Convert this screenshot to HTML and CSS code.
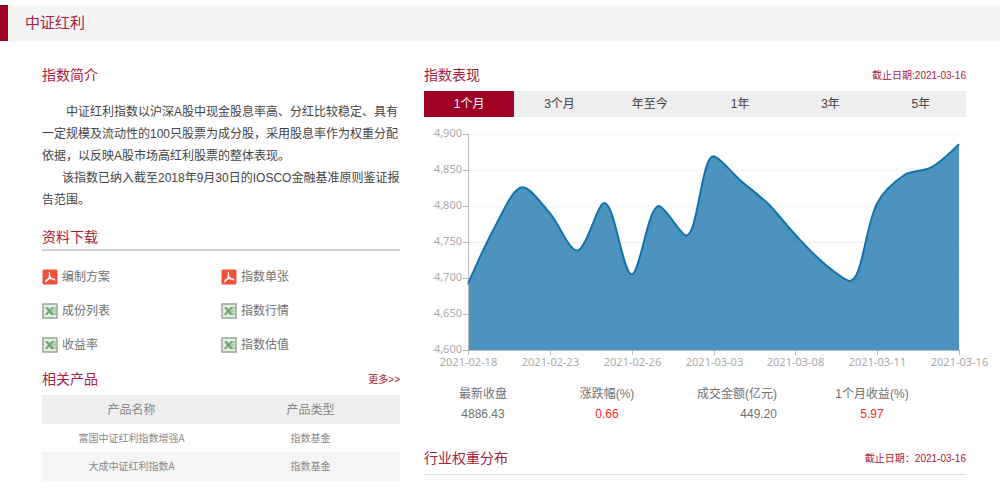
FILE: index.html
```html
<!DOCTYPE html>
<html lang="zh-CN">
<head>
<meta charset="utf-8">
<title>中证红利</title>
<link rel="stylesheet" href="styles.css">
</head>
<body>
<svg class="sprite" aria-hidden="true">
  <symbol id="pdf" viewBox="0 0 16 16">
    <rect x="0.5" y="0.5" width="15" height="15" rx="1.5" fill="#ee5038"/>
    <path d="M7.200 3.300c.7 1.600.6 3.200.1 4.700-.6 1.700-1.900 3.500-3.700 4.600M7.300 6.200c.8 2.200 2.600 4 5.400 4.600M4.300 11c2.300-1.300 5-1.700 8.300-.9" fill="none" stroke="#fff" stroke-width="1.300" stroke-linecap="round"/>
  </symbol>
  <symbol id="xls" viewBox="0 0 16 16">
    <rect x="1" y="1" width="14" height="14" fill="#e6efe4" stroke="#93a894" stroke-width="1.500"/>
    <path d="M9.500 4H14v8H9.500z" fill="#a5c6a3"/>
    <path d="M10 6.500h4M10 9.500h4M12.300 4v8" stroke="#d5e4d3" stroke-width=".6"/>
    <path d="M3 4.200h3.200l1.500 2.200 2-2.400H12L8.900 8l3.300 4H9L7.200 9.600 5.300 12H2.800l3-3.900z" fill="#6fa46f"/>
  </symbol>
</svg>

<header class="title-bar"><h1>中证红利</h1></header>

<main class="columns">
  <div class="column">
    <section>
      <div class="section-head"><h2>指数简介</h2></div>
      <div class="intro">
        <p>中证红利指数以沪深A股中现金股息率高、分红比较稳定、具有一定规模及流动性的100只股票为成分股，采用股息率作为权重分配依据，以反映A股市场高红利股票的整体表现。</p>
        <p>该指数已纳入截至2018年9月30日的IOSCO金融基准原则鉴证报告范围。</p>
      </div>
    </section>

    <section>
      <div class="section-head ruled-thick"><h2>资料下载</h2></div>
      <ul class="downloads">
        <li><a href="#"><svg><use href="#pdf"/></svg>编制方案</a></li>
        <li><a href="#"><svg><use href="#pdf"/></svg>指数单张</a></li>
        <li><a href="#"><svg><use href="#xls"/></svg>成份列表</a></li>
        <li><a href="#"><svg><use href="#xls"/></svg>指数行情</a></li>
        <li><a href="#"><svg><use href="#xls"/></svg>收益率</a></li>
        <li><a href="#"><svg><use href="#xls"/></svg>指数估值</a></li>
      </ul>
    </section>

    <section>
      <div class="section-head"><h2>相关产品</h2><a class="note" href="#">更多&gt;&gt;</a></div>
      <table class="products">
        <thead><tr><th scope="col">产品名称</th><th scope="col">产品类型</th></tr></thead>
        <tbody>
          <tr><td>富国中证红利指数增强A</td><td>指数基金</td></tr>
          <tr><td>大成中证红利指数A</td><td>指数基金</td></tr>
        </tbody>
      </table>
    </section>
  </div>

  <div class="column">
    <section>
      <div class="section-head"><h2>指数表现</h2><span class="note">截止日期:2021-03-16</span></div>
      <div class="tabs">
        <button type="button" class="active">1个月</button>
        <button type="button">3个月</button>
        <button type="button">年至今</button>
        <button type="button">1年</button>
        <button type="button">3年</button>
        <button type="button">5年</button>
      </div>
      <svg class="chart" id="chart" viewBox="0 0 542 250" role="img" aria-label="指数表现"></svg>
      <dl class="stats">
        <div><dt>最新收盘</dt><dd>4886.43</dd></div>
        <div><dt>涨跌幅(%)</dt><dd class="up">0.66</dd></div>
        <div class="align-end"><dt>成交金额(亿元)</dt><dd>449.20</dd></div>
        <div><dt>1个月收益(%)</dt><dd class="up">5.97</dd></div>
      </dl>
    </section>

    <section>
      <div class="section-head ruled"><h2>行业权重分布</h2><span class="note">截止日期：2021-03-16</span></div>
    </section>
  </div>
</main>
<script src="chart.js"></script>
</body>
</html>
```
FILE: styles.css
```css
* { box-sizing: border-box; }

body {
  margin: 0;
  padding-top: 5px;
  background: #fff;
  color: #444;
  font: 12px/22px "Liberation Sans", "Noto Sans CJK SC", sans-serif;
}

h1, h2, p, ul, dl, dd { margin: 0; padding: 0; }
h1, h2 { color: #a8203f; font-weight: 400; }
a { color: inherit; text-decoration: none; }

.sprite { position: absolute; width: 0; height: 0; }

.title-bar {
  padding: 6px 17px;
  border-left: 8px solid #9f0026;
  background: #f4f4f4;
}
.title-bar h1 { font-size: 15px; line-height: 24px; }

.columns {
  display: grid;
  grid-template-columns: 358fr 542fr;
  gap: 24px;
  padding: 24px 34px 0 42px;
}

.section-head {
  display: flex;
  justify-content: space-between;
  align-items: center;
}
.section-head h2 { font-size: 14px; line-height: 20px; }
.note { padding-top: 2px; color: #a8203f; font-size: 10px; line-height: 18px; }
.ruled-thick { padding-bottom: 2px; border-bottom: 2px solid #d0d3d2; }
.ruled { padding-bottom: 6px; border-bottom: 1px solid #ddd; }

.intro { padding: 16px 0; }
.intro p { text-indent: 24px; }
.intro p + p { text-indent: 20px; }

.downloads {
  display: grid;
  grid-template-columns: 1fr 1fr;
  padding: 9px 0 7px;
  list-style: none;
}
.downloads a {
  display: flex;
  align-items: center;
  gap: 4px;
  height: 34px;
  color: #707070;
}
.downloads svg { width: 16px; height: 16px; }

.products {
  width: 100%;
  margin-top: 6px;
  border-collapse: collapse;
  table-layout: fixed;
  color: #888;
  text-align: center;
}
.products th, .products td { padding: 3px 0; font-weight: 400; }
.products th { padding: 4px 0 2px; background: #eee; line-height: 23px; }
.products td { font-family: "Noto Sans CJK SC", sans-serif; font-size: 10px; line-height: 22px; }
.products tr:nth-child(even) td { padding: 3px 0 4px; background: #f5f5f5; }

.tabs {
  display: grid;
  grid-template-columns: repeat(6, 1fr);
  margin-top: 6px;
  background: #eee;
}
.tabs button {
  padding: 2px 0;
  border: 0;
  background: none;
  color: #444;
  font: inherit;
}
.tabs .active { background: #9f0026; color: #fff; }

.chart { display: block; width: 100%; overflow: visible; }
.chart text { fill: #aaa; font: 11px "Noto Sans", sans-serif; }
.chart .y-label { text-anchor: end; }
.chart .x-label { text-anchor: middle; }
.chart .grid { stroke: #f5f5f5; }
.chart .grid-over { stroke: #000; stroke-opacity: .03; }
.chart .axis { fill: none; stroke: #b8b8b8; }
.chart .area { fill: #4c94bf; }
.chart .line { fill: none; stroke: #1272aa; stroke-width: 2; }

.stats {
  display: grid;
  grid-template-columns: 118fr 130fr 130fr 140fr 24fr;
  padding: 17px 0 24px;
  color: #707070;
  line-height: 20px;
  text-align: center;
}
.stats .align-end { justify-self: center; text-align: right; }
.stats .up { color: #ff2a20; }
```
FILE: chart.js
```js
const svg = document.getElementById('chart');
const values = [4692, 4772, 4826, 4790, 4738, 4804, 4705, 4800, 4759, 4869,
  4835, 4803, 4760, 4722, 4696, 4804, 4843, 4854, 4886];
const dates = ['2021-02-18', '2021-02-23', '2021-02-26', '2021-03-03',
  '2021-03-08', '2021-03-11', '2021-03-16'];
const plot = { left: 44, right: 535, top: 17, bottom: 233, min: 4600, max: 4900 };

function add(tag, attributes, text) {
  const node = document.createElementNS('http://www.w3.org/2000/svg', tag);
  for (const key in attributes) node.setAttribute(key, attributes[key]);
  if (text) node.textContent = text;
  svg.append(node);
}

const xAt = (i, count) => plot.left + (plot.right - plot.left) * i / (count - 1);
const yAt = v => plot.bottom - (plot.bottom - plot.top) * (v - plot.min) / (plot.max - plot.min);
const points = values.map((v, i) => [xAt(i, values.length), yAt(v)]);
const clamp = (v, a, b) => Math.max(Math.min(a, b), Math.min(Math.max(a, b), v));

// Smooth curve whose control points stay between neighbouring values.
function smoothPath(pts) {
  let path = 'M' + pts[0].join(' ');
  let outgoing = pts[0];
  for (let i = 1; i < pts.length; i++) {
    const p = pts[i], prev = pts[i - 1], next = pts[i + 1];
    let incoming = p, after = p;
    if (next) {
      const a = Math.hypot(p[0] - prev[0], p[1] - prev[1]);
      const b = Math.hypot(next[0] - p[0], next[1] - p[1]);
      const r = b / (a + b);
      after = p.map((c, k) => clamp(c + (next[k] - prev[k]) * 0.32 * r, c, next[k]));
      incoming = p.map((c, k) => clamp(c - (after[k] - c) * a / b, c, prev[k]));
      after = p.map((c, k) => c + (c - incoming[k]) * b / a);
    }
    path += ' C' + [...outgoing, ...incoming, ...p].map(n => n.toFixed(1)).join(' ');
    outgoing = after;
  }
  return path;
}

const ticks = [4600, 4650, 4700, 4750, 4800, 4850, 4900];
const gridLine = (v, name) => add('line', {
  class: name, x1: plot.left, x2: plot.right,
  y1: Math.round(yAt(v)) + 0.5, y2: Math.round(yAt(v)) + 0.5
});
ticks.forEach(v => gridLine(v, 'grid'));

const curve = smoothPath(points);
add('path', { class: 'area', d: `${curve} V${plot.bottom} H${plot.left} Z` });
ticks.slice(1, 4).forEach(v => gridLine(v, 'grid-over'));
add('path', { class: 'axis', d: `M${plot.left + 0.5} ${plot.top} V${plot.bottom + 0.5} H${plot.right}` });
add('path', { class: 'line', d: curve });

ticks.forEach(v => {
  const y = Math.round(yAt(v)) + 0.5;
  add('line', { class: 'axis', x1: plot.left - 5, x2: plot.left, y1: y, y2: y });
  add('text', { class: 'y-label', x: 38, y: y + 2.5 }, v.toLocaleString('en-US'));
});
dates.forEach((date, i) => {
  const x = Math.round(xAt(i, dates.length)) + 0.5;
  add('line', { class: 'axis', x1: x, x2: x, y1: plot.bottom, y2: plot.bottom + 5 });
  add('text', { class: 'x-label', x, y: plot.bottom + 16 }, date);
});
```
